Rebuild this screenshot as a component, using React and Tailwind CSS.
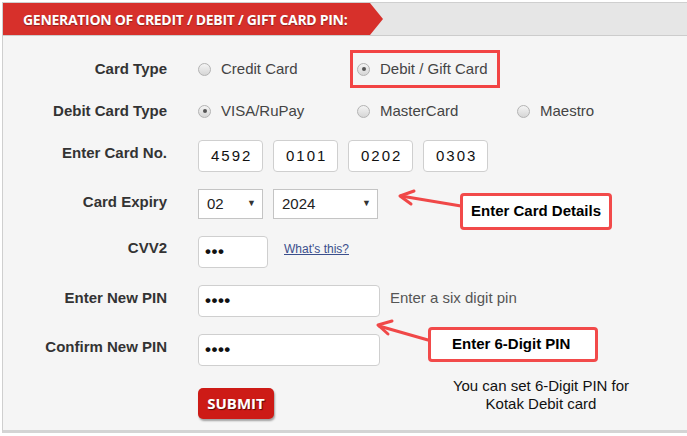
import React from 'react'

function Radio({ checked }) {
  return (
    <span className="relative inline-block w-[13px] h-[13px] rounded-full border border-[#b3b3b3] bg-gradient-to-b from-[#f4f4f4] to-[#d6d6d6] shrink-0">
      {checked && <span className="absolute left-[3.5px] top-[3.5px] w-[4px] h-[4px] rounded-full bg-[#555]" />}
    </span>
  )
}

function Option({ checked, label, className = '' }) {
  return (
    <div className={`flex items-center gap-[10px] text-[15px] text-[#444] ${className}`}>
      <Radio checked={checked} />
      <span>{label}</span>
    </div>
  )
}

function Row({ label, className = '', labelClass = '', children }) {
  return (
    <div className={`flex items-center ${className}`}>
      <div className={`w-[164px] text-right text-[15px] font-bold text-[#333] ${labelClass}`}>{label}</div>
      <div className="ml-[31px] flex items-center">{children}</div>
    </div>
  )
}

function Box({ w, children }) {
  return (
    <div className={`h-[32px] ${w} bg-white border border-[#cfcfcf] rounded-[4px] flex items-center`}>{children}</div>
  )
}

function Select({ w, value }) {
  return (
    <div className={`h-[30px] ${w} bg-white border border-[#c4c4c4] flex items-center justify-between pl-[8px] pr-[6px] text-[15px] text-[#222]`}>
      <span>{value}</span>
      <span className="text-[9px] text-[#333]">▼</span>
    </div>
  )
}

const arrowStroke = '#f04848'

export default function App() {
  return (
    <div className="relative w-[687px] h-[436px] bg-white pt-[2px] pl-[2px] font-['Liberation_Sans',Arial,sans-serif] overflow-hidden">
      <div className="h-[431px] bg-[#f5f5f5] border-l border-t border-[#cfcfcf] border-b-[3px] border-b-[#d4d4d4]">
        <div className="h-[33px] bg-[#e6e6e6] border-b border-[#cccccc] flex">
          <div className="w-[380px] h-[32px] bg-[#d7302b] [clip-path:polygon(0_0,367px_0,380px_50%,367px_100%,0_100%)] flex items-center pl-[20px] font-['Open_Sans',Arial,sans-serif] font-bold text-[14px] text-white tracking-[-0.3px] [text-shadow:0_1px_1px_rgba(0,0,0,0.35)]">
            GENERATION OF CREDIT / DEBIT / GIFT CARD PIN:
          </div>
        </div>

        <Row label="Card Type" className="mt-[14px] h-[38px]">
          <Option checked={false} label="Credit Card" className="w-[152px]" />
          <div className="h-[38px] w-[150px] border-[3px] border-[#f24444] flex items-center pl-[4px]">
            <Option checked label="Debit / Gift Card" />
          </div>
        </Row>

        <Row label="Debit Card Type" className="mt-[6px] h-[34px]">
          <Option checked label="VISA/RuPay" className="w-[159px]" />
          <Option checked={false} label="MasterCard" className="w-[160px]" />
          <Option checked={false} label="Maestro" />
        </Row>

        <Row label="Enter Card No." className="mt-[12px] h-[32px]" labelClass="pb-[6px]">
          <div className="flex gap-[10px]">
            {['4592', '0101', '0202', '0303'].map(n => (
              <Box key={n} w="w-[65px]">
                <span className="pl-[12px] text-[15px] tracking-[2px] text-[#111]">{n}</span>
              </Box>
            ))}
          </div>
        </Row>

        <Row label="Card Expiry" className="mt-[17px] h-[30px]" labelClass="pb-[4px]">
          <div className="flex gap-[10px]">
            <Select w="w-[65px]" value="02" />
            <Select w="w-[105px]" value="2024" />
          </div>
        </Row>

        <Row label="CVV2" className="mt-[17px] h-[32px]" labelClass="pb-[8px]">
          <Box w="w-[70px]">
            <span className="pl-[6px] text-[17px] font-bold tracking-[0.5px] text-[#111]">•••</span>
          </Box>
          <a className="ml-[16px] mb-[6px] text-[12px] text-[#3b4f8c] underline">What's this?</a>
        </Row>

        <Row label="Enter New PIN" className="mt-[17px] h-[32px]" labelClass="pb-[6px]">
          <Box w="w-[182px]">
            <span className="pl-[6px] text-[17px] font-bold tracking-[0.5px] text-[#111]">••••</span>
          </Box>
          <span className="ml-[10px] mb-[6px] text-[15px] text-[#555]">Enter a six digit pin</span>
        </Row>

        <Row label="Confirm New PIN" className="mt-[17px] h-[32px]" labelClass="pb-[6px]">
          <Box w="w-[182px]">
            <span className="pl-[6px] text-[17px] font-bold tracking-[0.5px] text-[#111]">••••</span>
          </Box>
        </Row>

        <div className="mt-[22px] ml-[195px]">
          <button className="w-[76px] h-[31px] rounded-[5px] bg-[#cd1b16] text-white font-bold text-[15px] font-['Open_Sans',Arial,sans-serif] [text-shadow:1px_1px_1px_rgba(0,0,0,0.6)] shadow-[1px_2px_2px_rgba(0,0,0,0.35)]">
            SUBMIT
          </button>
        </div>
      </div>

      {/* annotations */}
      <svg className="absolute left-0 top-0" width="687" height="436">
        <g stroke={arrowStroke} strokeWidth="3" fill="none" strokeLinecap="round" strokeLinejoin="round">
          <line x1="461" y1="206" x2="401" y2="196" />
          <polyline points="414,191 400,196 411,204" />
          <line x1="428" y1="340" x2="379" y2="326" />
          <polyline points="392,321 378,325 388,334" />
        </g>
      </svg>
      <div className="absolute left-[460px] top-[193px] w-[152px] h-[37px] bg-white border-[3px] border-[#f24a4a] rounded-[4px] flex items-center pl-[8px] text-[15px] font-bold text-black">
        Enter Card Details
      </div>
      <div className="absolute left-[428px] top-[327px] w-[170px] h-[35px] bg-white border-[3px] border-[#f24a4a] rounded-[4px] flex items-center pl-[21px] text-[15px] font-bold text-black">
        Enter 6-Digit PIN
      </div>
      <div className="absolute left-[430px] top-[377px] w-[222px] text-center text-[15px] leading-[18px] text-[#111]">
        You can set 6-Digit PIN for<br />Kotak Debit card
      </div>
    </div>
  )
}
